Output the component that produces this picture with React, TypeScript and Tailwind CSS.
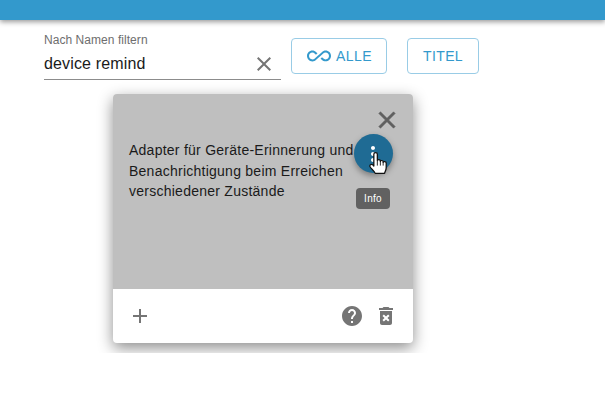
import React from "react";

function Hand() {
  return (
    <svg width="21" height="25" viewBox="0 0 18 24" preserveAspectRatio="none" className="absolute left-[368px] top-[151px]">
      <path
        d="M5 14.5V3.2C5 1 8 1 8 3.2V9.2C8 8 10.6 8 10.6 9.5V10C10.6 8.8 13 8.8 13 10.4V11C13 9.8 15.6 9.8 15.6 11.6V16C15.6 18.5 14.6 19.5 14.2 21.5H6.2C5.6 19.5 3.6 17.6 2 15.6C0.6 13.8 2.6 12 4 13.2Z"
        fill="#fff"
        stroke="#111"
        strokeWidth="1.1"
        strokeLinejoin="round"
      />
      <path d="M8 9.5V14M10.6 10V14M13 11V14" stroke="#111" strokeWidth="0.8" fill="none" />
    </svg>
  );
}

export default function App() {
  return (
    <div className="relative h-[353px] w-[605px] overflow-hidden bg-white font-['Liberation_Sans',Arial,sans-serif]">
      <div className="h-5 bg-[#3399cc] shadow-[0_2px_5px_rgba(0,0,0,0.4)]" />
      <div className="ml-[44px] mt-[18px] flex items-start">
        <div className="-mt-[5px] w-[237px] border-b border-[#8c8c8c]">
          <div className="text-[12px] leading-[14px] tracking-[0.05px] text-[#6e6e6e]">Nach Namen filtern</div>
          <div className="flex h-[32px] items-center justify-between">
            <span className="text-[16px] leading-[19px] tracking-[0.15px] text-[#1a1a1a]">device remind</span>
            <svg width="24" height="24" viewBox="0 0 24 24" className="mr-[5px] mt-[2px] fill-[#757575]">
              <path d="M19 6.41 17.59 5 12 10.59 6.41 5 5 6.41 10.59 12 5 17.59 6.41 19 12 13.41 17.59 19 19 17.59 13.41 12z" />
            </svg>
          </div>
        </div>
        <button className="ml-[10px] flex h-[36px] w-[96px] items-center justify-center gap-[4px] rounded border border-[#99cce6] text-[14px] tracking-[0.4px] text-[#3399cc]">
          <svg width="26" height="24" viewBox="0 0 24 24" className="fill-[#3399cc]">
            <path d="M18.6 6.62c-1.44 0-2.8.56-3.77 1.53L12 10.66 10.48 12h.01L7.8 14.39c-.64.64-1.49.99-2.4.99-1.87 0-3.39-1.51-3.39-3.38S3.53 8.62 5.4 8.62c.91 0 1.76.35 2.44 1.03l1.13 1 1.51-1.34L9.22 8.2C8.2 7.18 6.84 6.62 5.4 6.62 2.42 6.62 0 9.04 0 12s2.42 5.38 5.4 5.38c1.44 0 2.8-.56 3.77-1.53l2.83-2.5.01.01L13.52 12h-.01l2.69-2.39c.64-.64 1.49-.99 2.4-.99 1.87 0 3.39 1.51 3.39 3.38s-1.52 3.38-3.39 3.38c-.9 0-1.76-.35-2.44-1.03l-1.14-1.01-1.51 1.34 1.27 1.12c1.02 1.01 2.37 1.57 3.82 1.57 2.98 0 5.4-2.41 5.4-5.38s-2.42-5.37-5.4-5.37z" />
          </svg>
          ALLE
        </button>
        <button className="ml-[20px] h-[36px] w-[72px] rounded border border-[#99cce6] text-[14px] tracking-[0.4px] text-[#3399cc]">
          TITEL
        </button>
      </div>

      <div className="ml-[113px] mt-[14px] flex h-[249px] w-[300px] flex-col overflow-hidden rounded-[4px] bg-white shadow-[0_5px_15px_rgba(0,0,0,0.45)]">
        <div className="h-[195px] bg-[#bfbfbf] pl-[16px] pr-[8px] pt-[46px]">
          <p className="text-[14px] leading-[20.5px] tracking-[0.25px] text-[#1a1a1a]">
            Adapter für Geräte-Erinnerung und
            <br />
            Benachrichtigung beim Erreichen
            <br />
            verschiedener Zustände
          </p>
        </div>
        <div className="flex flex-1 items-center justify-between pl-[15px] pr-[15px]">
          <svg width="24" height="24" viewBox="0 0 24 24" className="fill-[#757575]">
            <path d="M19 13h-6v6h-2v-6H5v-2h6V5h2v6h6z" />
          </svg>
          <div className="flex items-center gap-[10px]">
            <svg width="24" height="24" viewBox="0 0 24 24" className="fill-[#757575]">
              <path d="M12 2C6.48 2 2 6.48 2 12s4.48 10 10 10 10-4.48 10-10S17.52 2 12 2zm1 17h-2v-2h2v2zm2.07-7.75-.9.92C13.45 12.9 13 13.5 13 15h-2v-.5c0-1.1.45-2.1 1.17-2.83l1.24-1.26c.37-.36.59-.86.59-1.41 0-1.1-.9-2-2-2s-2 .9-2 2H8c0-2.21 1.79-4 4-4s4 1.79 4 4c0 .88-.36 1.68-.93 2.25z" />
            </svg>
            <svg width="24" height="24" viewBox="0 0 24 24" className="fill-[#757575]">
              <path d="M6 19c0 1.1.9 2 2 2h8c1.1 0 2-.9 2-2V7H6v12zm2.46-7.12 1.41-1.41L12 12.59l2.12-2.12 1.41 1.41L13.41 14l2.12 2.12-1.41 1.41L12 15.41l-2.12 2.12-1.41-1.41L10.59 14l-2.13-2.12zM15.5 4l-1-1h-5l-1 1H5v2h14V4z" />
            </svg>
          </div>
        </div>
      </div>

      {/* overlays on the card */}
      <svg width="28" height="28" viewBox="0 0 24 24" className="absolute left-[373px] top-[106px] fill-[#5f5f5f] stroke-[#5f5f5f] stroke-[0.5]">
        <path d="M19 6.41 17.59 5 12 10.59 6.41 5 5 6.41 10.59 12 5 17.59 6.41 19 12 13.41 17.59 19 19 17.59 13.41 12z" />
      </svg>
      <div className="absolute left-[354px] top-[134px] flex h-[39px] w-[39px] items-center justify-center rounded-full bg-[#1f6b94] shadow-[0_3px_6px_rgba(0,0,0,0.35)]">
        <svg width="24" height="24" viewBox="0 0 24 24" className="-ml-[1px] fill-white">
          <path d="M12 8c1.1 0 2-.9 2-2s-.9-2-2-2-2 .9-2 2 .9 2 2 2zm0 2c-1.1 0-2 .9-2 2s.9 2 2 2 2-.9 2-2-.9-2-2-2zm0 6c-1.1 0-2 .9-2 2s.9 2 2 2 2-.9 2-2-.9-2-2-2z" />
        </svg>
      </div>
      <Hand />
      <div className="absolute left-[356px] top-[188px] flex h-[21px] w-[34px] items-center justify-center rounded-[4px] bg-[#616161] text-[10px] tracking-[0.3px] text-white">
        Info
      </div>
    </div>
  );
}
